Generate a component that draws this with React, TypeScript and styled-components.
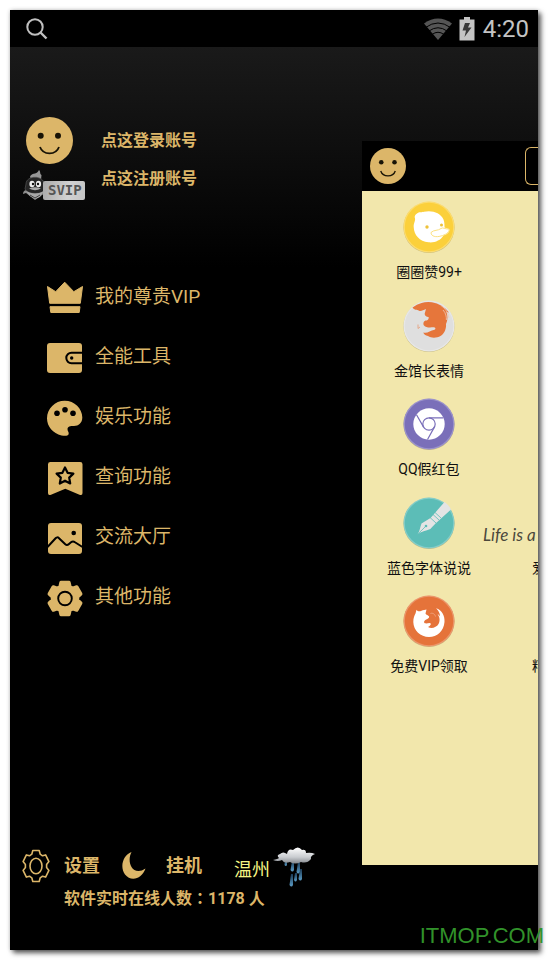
import React from "react";
import styled, { createGlobalStyle } from "styled-components";

const GOLD = "#dcb669";
const CREAM = "#f2e7ac";

const GlobalStyle = createGlobalStyle`
  * { box-sizing: border-box; }
  html { background: #fff; }
  body { margin: 0; font-family: Roboto, "Noto Sans CJK SC", sans-serif; color: ${GOLD}; }
  button { font: inherit; color: inherit; background: none; border: 0; padding: 0; cursor: pointer; }
  a { color: inherit; text-decoration: none; }
  svg { display: block; flex: none; }
  ul { list-style: none; margin: 0; padding: 0; }
`;

const Page = styled.div`
  position: relative;
  display: flex;
  min-height: 100vh;
  padding: 10px 11px 11px 10px;
  overflow: hidden;
`;

const Phone = styled.div`
  flex: 1;
  min-width: 0;
  display: flex;
  flex-direction: column;
  background: #000;
  box-shadow: 3px 3px 5px rgba(0, 0, 0, 0.65), 0 0 4px rgba(0, 0, 0, 0.2);
`;

const StatusBar = styled.header`
  display: flex;
  align-items: center;
  height: 37px;
  padding: 0 9px 0 16px;
  color: #c4c4c4;
`;

const StatusGroup = styled.div`
  display: flex;
  align-items: center;
  margin-left: auto;
`;

const Clock = styled.time`
  margin-left: 8px;
  padding-top: 1px;
  font-size: 24px;
  line-height: 36px;
`;

const Battery = styled.div`
  margin-left: 7px;
`;

const Body = styled.div`
  flex: 1;
  display: flex;
  background: linear-gradient(#1a1a1a, #000 220px);
`;

const Drawer = styled.nav`
  flex: 2;
  min-width: 0;
  display: flex;
  flex-direction: column;
  padding: 70px 0 41px;
`;

const Profile = styled.section`
  display: flex;
  gap: 16px;
  padding-left: 13px;
`;

const Badges = styled.div`
  display: flex;
  flex-direction: column;
  gap: 6px;
  width: 62px;
`;

const Avatar = styled.button`
  width: 47px;
  margin-left: 3px;
`;

const Svip = styled.div`
  display: flex;
  align-items: flex-end;
  height: 30px;
`;

const SvipPlate = styled.span`
  flex: 1;
  height: 19px;
  margin-left: -6px;
  padding-left: 5px;
  border-radius: 2px;
  background: linear-gradient(100deg, #a9a9a9, #d2d2d2 60%, #c4c4c4);
  color: #555;
  font: bold 14px/19px "DejaVu Sans Mono", monospace;
`;

const AccountLinks = styled.div`
  display: flex;
  flex-direction: column;
  padding-top: 5px;
`;

const AccountLink = styled.a`
  font-size: 16px;
  font-weight: 600;
  line-height: 38px;
`;

const Menu = styled.ul`
  padding: 68px 0 0 37px;
`;

const MenuButton = styled.button`
  display: flex;
  align-items: center;
  gap: 12px;
  height: 60px;
  font-size: 19px;
  line-height: 24px;
`;

const MenuText = styled.span`
  padding-bottom: 2px;
`;

const Footer = styled.footer`
  display: flex;
  flex-direction: column;
  margin-top: auto;
  padding-left: 12px;
`;

const FooterRow = styled.div`
  display: flex;
  align-items: center;
  height: 42px;
`;

const FooterButton = styled.button<{ $gap: number }>`
  display: flex;
  align-items: center;
  gap: ${(p) => p.$gap}px;
  margin-right: 21px;
  font-size: 18px;
  font-weight: 600;
  line-height: 24px;
`;

const Weather = styled.div`
  display: flex;
  align-items: center;
  margin-left: 11px;
  gap: 3px;
`;

const City = styled.span`
  padding-top: 8px;
  color: #f6f684;
  font-size: 18px;
  line-height: 24px;
`;

const Online = styled.p`
  margin: 0;
  padding-left: 42px;
  font-size: 16px;
  font-weight: 600;
  line-height: 20px;
  white-space: nowrap;
`;

const Colon = styled.span`
  font-family: "Noto Sans CJK TC", sans-serif;
`;

const Count = styled.span`
  font-weight: 700;
`;

const Preview = styled.main`
  position: relative;
  flex: 1;
  min-width: 0;
  display: flex;
  flex-direction: column;
  margin: 94px 0 85px;
  overflow: hidden;
  background: ${CREAM};
  color: #111;
`;

const AppBar = styled.div`
  display: flex;
  align-items: center;
  justify-content: space-between;
  height: 50px;
  padding-left: 8px;
  background: #000;
`;

const TabFrame = styled.button`
  width: 13px;
  height: 38px;
  && {
    border: 1px solid ${GOLD};
    border-right: 0;
    border-radius: 6px 0 0 6px;
  }
`;

const Tiles = styled.ul`
  flex: 1;
  display: grid;
  grid-template-rows: repeat(5, minmax(90px, 1fr));
  && { padding: 10px 0 171px; }
`;

const TileRow = styled.li`
  display: grid;
  grid-template-columns: 134px 135px;
  align-items: start;
`;

const Tile = styled.button`
  display: flex;
  flex-direction: column;
  align-items: center;
  gap: 9px;
  font-size: 14px;
  line-height: 20px;
  white-space: nowrap;
`;

const NextTile = styled.button`
  padding: 61px 0 0 36px;
  font-size: 14px;
  line-height: 20px;
  text-align: left;
`;

const Handwriting = styled.span`
  position: absolute;
  top: 382px;
  left: 121px;
  color: #4b483c;
  font: italic 400 17px/24px Lato, sans-serif;
  white-space: nowrap;
`;

const Watermark = styled.span`
  position: absolute;
  right: 5px;
  bottom: 13px;
  color: #31922a;
  font: 22px/24px "Liberation Sans", Arial, sans-serif;
`;

function Smile({ size }: { size: number }) {
  return (
    <svg width={size} height={size} viewBox="0 0 47 47" aria-hidden="true">
      <circle cx="23.5" cy="23.5" r="23.5" fill={GOLD} />
      <circle cx="14.7" cy="18.7" r="3" fill="#181306" />
      <circle cx="32" cy="18.7" r="3" fill="#181306" />
      <path d="M14 30C17 38.500 30 38.500 33 30" fill="none" stroke="#181306" strokeWidth="1.8" />
    </svg>
  );
}

function gearPath(cx: number, cy: number, rx: number, ry: number, valley: number) {
  const points: string[] = [];
  for (let i = 0; i < 6; i++) {
    const corners: [number, number][] = [[-23, valley], [-14, 1], [14, 1], [23, valley]];
    corners.forEach(([offset, r]) => {
      const a = ((i * 60 - 90 + offset) * Math.PI) / 180;
      points.push(`${(cx + Math.cos(a) * r * rx).toFixed(1)} ${(cy + Math.sin(a) * r * ry).toFixed(1)}`);
    });
  }
  return `M${points.join("L")}Z`;
}

const menuIcons: Record<string, React.ReactNode> = {
  crown: (
    <g stroke={GOLD} strokeWidth="1" strokeLinejoin="round">
      <path d="M.5 6.500 8.700 11.700 17.700 2.200 26.800 11.700 35.500 6.500 33.300 23.300H2.700Z" />
      <path d="M3 26.700H33L32.200 32.500H3.800Z" />
    </g>
  ),
  wallet: (
    <g>
      <rect y="3" width="35" height="30" rx="3" />
      <path d="M35 12.800H24.500a5.200 5.200 0 0 0 0 10.400H35" fill="none" stroke="#000" strokeWidth="2" />
      <circle cx="24.700" cy="18" r="1.700" fill="#000" />
    </g>
  ),
  palette: (
    <g>
      <path d="M17.700.7C27.500.7 35.300 8.500 35.300 17.500C35.300 23 31.500 26 27 26C23 26 20.700 26.500 20.500 29C20.300 31 22.500 32.500 21.500 34.500C20.700 36.200 17.500 36 14.500 35.400C6 33.600 0 26.500 0 18.300C0 8.500 8 .7 17.700.7Z" />
      <circle cx="10" cy="13.300" r="2.800" fill="#000" />
      <circle cx="18" cy="9.700" r="2.800" fill="#000" />
      <circle cx="26" cy="13.300" r="2.800" fill="#000" />
    </g>
  ),
  bookmark: (
    <g>
      <path d="M3.500 2H33.200Q35.500 2 35.500 4.300V33Q35.500 36 32.500 34.700L18.300 28.700 4 34.700Q1 36 1 33V4.300Q1 2 3.500 2Z" />
      <path d="M18 7.500 20.600 12.800 26.400 13.600 22.200 17.600 23.200 23.500 18 20.700 12.800 23.500 13.800 17.600 9.600 13.600 15.400 12.800Z" fill="none" stroke="#000" strokeWidth="2.200" strokeLinejoin="round" />
    </g>
  ),
  image: (
    <g>
      <rect x="1" y="3" width="34" height="31" rx="3" />
      <path d="M.5 27 8.600 18.300Q10.300 16.500 12 18.200L18.300 24.300Q20 25.800 22 24L24 22.300Q26 20.700 28 22.300L35.500 27" fill="none" stroke="#000" strokeWidth="2" />
      <circle cx="26.700" cy="13" r="2.300" fill="#000" />
    </g>
  ),
  gear: (
    <g>
      <path d={gearPath(18, 18.5, 16.3, 16.6, 0.77)} stroke={GOLD} strokeWidth="3.500" strokeLinejoin="round" />
      <circle cx="18" cy="18.500" r="6.800" fill="none" stroke="#000" strokeWidth="1.900" />
    </g>
  ),
};

const menu = [
  { icon: "crown", label: "我的尊贵VIP" },
  { icon: "wallet", label: "全能工具" },
  { icon: "palette", label: "娱乐功能" },
  { icon: "bookmark", label: "查询功能" },
  { icon: "image", label: "交流大厅" },
  { icon: "gear", label: "其他功能" },
];

const tiles = [
  {
    label: "圈圈赞99+",
    color: "#fbd03b",
    art: (
      <g fill="#fff">
        <path d="M14 12.500C16 10.500 19 11.500 21 10.700C29 9 37.500 11.500 40.500 18.500C41.500 21 41.500 24 41.500 26.500L46 28C47.500 30.500 44 33.500 40.500 34.500C37.500 39.500 31.500 42 25.500 41.300C16.500 40.500 11 34 10.700 26C10.500 22 12.500 20 12 17.500C11.200 15.500 12 13.500 14 12.500Z" />
        <path d="M28 31.500C31 28.500 35 30 38 27.500C40 26 41.500 28.200 46.200 28C46.500 31.500 42 34 38 35C33 36.500 28 35.500 28 31.500Z" stroke="#fbdc72" strokeWidth=".9" />
        <circle cx="24" cy="26" r="1.700" fill="#eec23a" />
        <circle cx="38.500" cy="24" r="1.500" fill="#eec23a" />
      </g>
    ),
  },
  {
    label: "金馆长表情",
    color: "#dfdfdf",
    art: (
      <g>
        <path d="M9.500 7.500A25.700 25.700 0 0 1 46 12.500L43.500 12C45 16.500 44.500 21 43 24C43.500 29 41 34 37.500 36C34 38 28.500 38.500 25 36C22.500 35.500 20.800 34 20.300 32.400C24 34 27 30.500 31.500 29.800C33 29 32.500 27.500 31 27.300C27 27.500 23 28 21 25.500C19.500 23.500 21 21 22.500 20.600C24.500 20.800 26 19 25.600 17C22.500 16.500 21 15 22 12.500L23 9C20 10 18.500 11.500 16 10.700C14 9.500 11.500 10.500 9.500 7.500Z" fill="#e6763b" />
        <path d="M38 5.500C42.500 8.500 45 12.500 46 18M40 10C43 13 43.500 17 43.400 20" fill="none" stroke="#efc9b5" strokeWidth=".8" />
        <path d="M15 24.500V28.500L17 27" fill="none" stroke="#e69a75" strokeWidth=".8" />
      </g>
    ),
  },
  {
    label: "QQ假红包",
    color: "#7a6fb9",
    art: (
      <g>
        <circle cx="26" cy="26" r="15.700" fill="#fff" />
        <g fill="none" stroke="#7a6fb9" strokeWidth="1.200">
          <circle cx="26" cy="26" r="6.200" />
          <path d="M26 19.800H40.300M20.600 29.100 13.500 16.700M31.400 29.100 24.500 41.500" />
        </g>
      </g>
    ),
  },
  {
    label: "蓝色字体说说",
    color: "#5cbdb7",
    art: (
      <g>
        <path d="M14.600 37.300C17 34 17 30 18.500 26.500L27.500 21 41.500 5C44 6.500 46.800 9.500 48 12.500L32.500 26.500 27.300 32C23 34 18 34.500 14.600 37.300Z" fill="#e4e4e4" />
        <path d="M14.600 37.300 22.500 29.500M27 20.500 33 26M30 17.500 36 23M32 15.500 38 21" fill="none" stroke="#5cbdb7" strokeWidth=".8" />
        <circle cx="23" cy="29" r="1.300" fill="#5cbdb7" />
      </g>
    ),
  },
  {
    label: "免费VIP领取",
    color: "#e5733a",
    art: (
      <g>
        <path d="M13.500 14.700C14.500 16.500 16.500 16.500 18 16C20.500 14.700 22 15 23.500 14.500L22.500 18.500C23.500 20.500 27 20.500 26 22.500C24.500 24.500 21.500 24.500 21 27C21.500 29 24 28.500 26.500 28C29 28.200 27.500 31 25 32C28.500 34 33.500 32.500 35.500 29C37.500 25.500 36.500 21.500 34.500 19C35.500 19.500 36.500 20.500 37 21.500C37 18 35.500 15.500 33 13.200C39 15 42 21 41.500 27C40.800 36 34 42 26 42C17.500 42 10.500 35.500 10.300 27C10.200 23 11.500 20.500 12.500 18.500Z" fill="#fff" />
        <path d="M27.500 18.500C30 17.500 32 19.500 32.500 21.500" fill="none" stroke="#f0a27c" strokeWidth="1" />
      </g>
    ),
  },
];

const nextColumn: Record<number, string> = { 3: "爱", 4: "精" };

export default function App() {
  return (
    <Page>
      <GlobalStyle />
      <Phone>
        <StatusBar>
          <svg width="22" height="22" viewBox="0 0 22 22" fill="none" stroke="#c0c0c0" strokeWidth="2" aria-hidden="true">
            <circle cx="9" cy="9" r="7.700" />
            <path d="M14.500 14.500 20.500 20.500" strokeWidth="2.400" />
          </svg>
          <StatusGroup>
            <svg width="28" height="22" viewBox="0 0 28 22" aria-hidden="true">
              <path d="M0 5.500Q14-4.500 28 5.500L14 22Z" fill="#555" />
              <path d="M1.500 9.500Q14 .5 26.500 9.500M5 13Q14 6.500 23 13M8 16.500Q14 12 20 16.500" fill="none" stroke="#000" strokeWidth="1" />
            </svg>
            <Battery>
              <svg width="16" height="24" viewBox="0 0 16 24" aria-hidden="true">
                <path d="M5 0H11V2.500H15.500V23.500H.5V2.500H5Z" fill="#c4c4c4" />
                <path d="M6 6H11L9 10.500H12.500L5.500 20 7 13.500H3.500Z" fill="#383838" />
              </svg>
            </Battery>
            <Clock>4:20</Clock>
          </StatusGroup>
        </StatusBar>
        <Body>
          <Drawer>
            <Profile>
              <Badges>
                <Avatar aria-label="头像"><Smile size={47} /></Avatar>
                <Svip>
                  <svg width="26" height="30" viewBox="0 0 26 30" aria-hidden="true">
                    <path d="M9 9C5 7 8 4 12 3.500C14 3 15 2 16 0C18 2 16.500 4 18.500 5L18 10Z" fill="#969696" />
                    <path d="M4 20C1 20 0 22 0 24L3 23 12 30 22 23 23 20Z" fill="#8b8b8b" />
                    <path d="M3 14C3 5 21 5 21 14L22 19C20 25 5 25 2 19Z" fill="#252525" stroke="#555" strokeWidth=".7" />
                    <ellipse cx="9" cy="14" rx="2.600" ry="3.200" fill="#eee" />
                    <ellipse cx="15.500" cy="14" rx="2.600" ry="3.200" fill="#eee" />
                    <circle cx="10" cy="14" r="1.200" fill="#111" />
                    <circle cx="15" cy="14" r="1.200" fill="#111" />
                    <path d="M6 18.500Q12 16 18 18.500Q12 22 6 18.500Z" fill="#aaa" />
                    <path d="M3 21Q12 26 21 21L17 27 12 29 7 26Z" fill="#a8a8a8" />
                    <path d="M7 25 12 28 17 25" fill="none" stroke="#444" />
                  </svg>
                  <SvipPlate>SVIP</SvipPlate>
                </Svip>
              </Badges>
              <AccountLinks>
                <AccountLink href="#login">点这登录账号</AccountLink>
                <AccountLink href="#register">点这注册账号</AccountLink>
              </AccountLinks>
            </Profile>
            <Menu>
              {menu.map((item) => (
                <li key={item.label}>
                  <MenuButton>
                    <svg width="36" height="37" viewBox="0 0 36 37" fill={GOLD} aria-hidden="true">
                      {menuIcons[item.icon]}
                    </svg>
                    <MenuText>{item.label}</MenuText>
                  </MenuButton>
                </li>
              ))}
            </Menu>
            <Footer>
              <FooterRow>
                <FooterButton $gap={14}>
                  <svg width="28" height="34" viewBox="0 0 28 34" fill="none" stroke={GOLD} strokeWidth="1.600" strokeLinejoin="round" aria-hidden="true">
                    <path d={gearPath(14, 17, 13.4, 16, 0.8)} />
                    <ellipse cx="14" cy="17" rx="6" ry="7.800" />
                  </svg>
                  设置
                </FooterButton>
                <FooterButton $gap={20}>
                  <svg width="25" height="30" viewBox="0 0 25 30" fill={GOLD} aria-hidden="true">
                    <path d="M10.500 1C2 4-1.500 16 4 23.500C10 31 21 28 24.500 17.500C19 21.500 13 20.500 10.500 16C8 11.500 8 6 10.500 1Z" />
                  </svg>
                  挂机
                </FooterButton>
                <Weather>
                  <City>温州</City>
                  <svg width="44" height="42" viewBox="0 0 44 42" aria-label="雨">
                    <defs>
                      <linearGradient id="cloud" x1="0" y1="0" x2="0" y2="1">
                        <stop offset="0" stopColor="#fff" />
                        <stop offset=".6" stopColor="#c9ccd0" />
                        <stop offset="1" stopColor="#84888d" />
                      </linearGradient>
                      <linearGradient id="drop" x1="0" y1="0" x2="0" y2="1">
                        <stop offset="0" stopColor="#1b3a55" />
                        <stop offset="1" stopColor="#5b9bc4" />
                      </linearGradient>
                    </defs>
                    <g fill="url(#drop)">
                      <path d="M12 15H14V20Q13 22 11.500 20Z" />
                      <path d="M19 16H21V25Q19.500 28 17.500 25Z" />
                      <path d="M25 17H27V27Q25 30 23.500 27Z" />
                      <path d="M18 29H20V40Q18.500 43 16.500 40Z" />
                      <path d="M22 28H24V35Q22.500 38 21 35Z" />
                      <path d="M27 24H29V34Q27.500 37 25.500 34Z" />
                    </g>
                    <path d="M0 15Q5 14 6 13Q3 10 7 9Q10 6 14 9Q15 3 20 5Q25 0 29 5Q33 4 33 8Q38 7 42 9Q37 11 38 14Q34 19 28 17Q22 20 17 17Q11 19 9 15Q5 17 0 15Z" fill="url(#cloud)" />
                  </svg>
                </Weather>
              </FooterRow>
              <Online>软件实时在线人数<Colon>：</Colon><Count>1178</Count> 人</Online>
            </Footer>
          </Drawer>
          <Preview>
            <AppBar>
              <button aria-label="菜单"><Smile size={36} /></button>
              <TabFrame aria-label="标签" />
            </AppBar>
            <Tiles>
              {tiles.map((tile, i) => (
                <TileRow key={tile.label}>
                  <Tile>
                    <svg width="52" height="52" viewBox="0 0 52 52" aria-hidden="true">
                      <circle cx="26" cy="26.500" r="25.500" fill="#c9bd83" />
                      <circle cx="26" cy="26" r="25.500" fill={tile.color} />
                      <circle cx="26" cy="26" r="24.800" fill="none" stroke="#fff" strokeOpacity=".25" strokeWidth="1.200" />
                      {tile.art}
                    </svg>
                    {tile.label}
                  </Tile>
                  {nextColumn[i] && <NextTile>{nextColumn[i]}</NextTile>}
                </TileRow>
              ))}
            </Tiles>
            <Handwriting>Life is a</Handwriting>
          </Preview>
        </Body>
      </Phone>
      <Watermark>ITMOP.COM</Watermark>
    </Page>
  );
}
